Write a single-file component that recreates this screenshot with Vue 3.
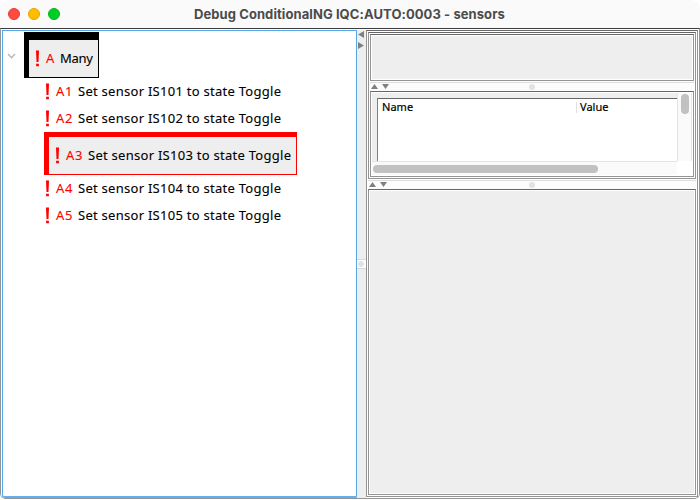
<script setup>
const actions = [
  { id: 'A1', sensor: 'IS101' },
  { id: 'A2', sensor: 'IS102' },
  { id: 'A3', sensor: 'IS103', current: true },
  { id: 'A4', sensor: 'IS104' },
  { id: 'A5', sensor: 'IS105' },
]
</script>

<template>
  <div class="window">
    <header class="titlebar">
      <div class="lights"><i class="close"></i><i class="minimize"></i><i class="maximize"></i></div>
      <h1><span>Debug ConditionalNG IQC:AUTO:0003 - sensors</span></h1>
    </header>
    <main class="content">
      <section class="tree">
        <div class="root-row">
          <svg class="chevron" width="9" height="6" viewBox="0 0 9 6"><path d="M1 1L4.5 4.7L8 1" /></svg>
          <div class="node boxed black">
            <svg class="bang" width="4" height="17" viewBox="0 0 4 17"><path d="M1 .5H4L3.5 12H1.5Z" /><path d="M1.1 13.8H3.9V16.2H1.1Z" /></svg>
            <span class="id">A</span><span class="many">Many</span>
          </div>
        </div>
        <div v-for="a in actions" :key="a.id" class="node" :class="{ boxed: a.current, red: a.current }">
          <svg class="bang" width="4" height="17" viewBox="0 0 4 17"><path d="M1 .5H4L3.5 12H1.5Z" /><path d="M1.1 13.8H3.9V16.2H1.1Z" /></svg>
          <span class="id">{{ a.id }}</span><span class="label">Set sensor {{ a.sensor }} to state Toggle</span>
        </div>
      </section>
      <div class="vdivider">
        <svg width="6" height="18" viewBox="0 0 6 18"><path d="M6 0V7L0 3.5ZM0 11V18L6 14.5Z" /></svg>
        <div class="vgrip"><i></i></div>
      </div>
      <section class="frame right">
        <div class="frame upper">
          <div class="frame top-box"></div>
          <div class="hdivider first">
            <svg width="19" height="5" viewBox="0 0 19 5"><path d="M0 5H7L3.5 0ZM11 0H18L14.5 5Z" /></svg><i></i>
          </div>
          <div class="frame table-box">
            <div class="table-row">
              <div class="table"><span class="name">Name</span><span class="value">Value</span></div>
              <div class="vscroll"><i></i></div>
            </div>
            <div class="hscroll"><i></i></div>
          </div>
        </div>
        <div class="hdivider second">
          <svg width="19" height="5" viewBox="0 0 19 5"><path d="M0 5H7L3.5 0ZM11 0H18L14.5 5Z" /></svg><i></i>
        </div>
        <div class="frame lower"></div>
      </section>
    </main>
  </div>
</template>

<style>
body { background: #fff; overflow: hidden; }
</style>

<style scoped>
* { box-sizing: border-box; }
.window {
  width: 700px; height: 499px; display: flex; flex-direction: column; overflow: hidden;
  border-radius: 9px 9px 5px 5px; background: #fff;
  font: 13px/17px "Noto Sans", "Open Sans", sans-serif; color: #000;
}
.titlebar { display: flex; height: 28px; flex: none; background: #fafafa; align-items: center; }
.lights { display: flex; gap: 8px; padding-left: 8px; width: 60px; flex: none; }
.lights i { width: 12px; height: 12px; border-radius: 50%; border: 1px solid #e33e38; background: #ff4a44; }
.lights .minimize { background: #ffbd00; border-color: #e3a500; }
.lights .maximize { background: #00ce25; border-color: #00b51f; }
h1 {
  margin: 0 0 0 134px; font: 700 13px/16px Inter, sans-serif; color: #4b4b4b;
  white-space: nowrap; letter-spacing: .08px;
}
.content {
  flex: 1; min-height: 0; display: flex; border: 1px solid #949494; border-top-color: #3c3c3c;
  border-radius: 0 0 5px 5px; padding: 1px 1px 0;
}
.tree {
  width: 355px; flex: none; border: 1px solid #56a7e8; border-bottom: 2px solid #62b0f2;
  padding: 1px 0 0 41px; border-radius: 0 0 0 3px;
}
.root-row { display: flex; align-items: center; margin-left: -37px; height: 46px; }
.chevron { fill: none; stroke: #b8b8b8; stroke-width: 1.5; margin: 2px 8px 0 0; }
.node {
  display: flex; align-items: center; height: 27px; padding-left: 1px; white-space: nowrap;
  letter-spacing: .27px; -webkit-text-stroke: .1px currentColor;
}
.bang { fill: #f00; flex: none; margin-right: 7px; }
.id { color: #f00; width: 22px; flex: none; letter-spacing: .8px; }
.many { letter-spacing: -.3px; }
.boxed { background: #eee; border: 1px solid #000; border-left-width: 5px; padding-left: 6px; }
.black { width: 75px; height: 46px; border-top-width: 8px; }
.black .id { width: 14px; }
.red { width: 253px; height: 43px; border-color: #f00; border-top-width: 5px; }
.vdivider {
  width: 9px; flex: none; background: #eee; display: flex; flex-direction: column;
  padding: 1px 0 0 1px;
}
.vdivider svg { fill: #808080; flex: none; }
.vgrip {
  margin: 210px 0 0 -1px; width: 9px; height: 10px; background: #fff;
  border: solid #d8d8d8; border-width: 1px 0; display: flex; align-items: center; padding-left: 1px;
}
.vgrip i, .hdivider i { width: 6px; height: 6px; border-radius: 50%; background: #e2e2e2; }
.frame { border: 1px solid #949494; border-top-color: #666; padding: 1px; background: #fff; }
.right { width: 332px; height: 467px; display: flex; flex-direction: column; }
.upper { height: 147px; flex: none; }
.top-box, .lower { background: #eee content-box; box-shadow: inset 0 0 0 1px #fff; }
.top-box { height: 47px; }
.hdivider { display: flex; height: 10px; flex: none; padding: 1px 0 0 1px; background: linear-gradient(#fff 0 1px, #ddd 1px 2px, #fcfcfc 2px); align-items: center; }
.hdivider svg { fill: #808080; }
.hdivider i { margin-left: 139px; }
.second i { margin-left: 141px; }
.table-box { height: 86px; }
.table-row { display: flex; height: 68px; background: #eee; padding-left: 5px; }
.table {
  width: 300px; height: 63px; margin-top: 5px; background: #fff;
  border: solid #808080; border-width: 1px 0 0 1px; border-top-color: #666;
  display: flex; font-size: 11px; letter-spacing: .02px; -webkit-text-stroke: .2px currentColor;
}
.name { width: 199px; padding-left: 4px; border-right: 1px solid #e0e0e0; height: 11px; margin-top: 3px; line-height: 10px; }
.value { padding-left: 3px; margin-top: 3px; line-height: 10px; }
.vscroll { width: 15px; background: #fafafa; border: solid #e4e4e4; border-width: 0 1px; padding: 1px 0 0 3px; }
.vscroll i { display: block; width: 8px; height: 20px; border-radius: 4px; background: #c1c1c1; }
.hscroll { width: 305px; height: 14px; border-top: 1px solid #e4e4e4; background: #fafafa; padding: 3px 0 0 1px; }
.hscroll i { display: block; width: 225px; height: 8px; border-radius: 4px; background: #c1c1c1; }
.lower { height: 306px; width: 328px; }
</style>
